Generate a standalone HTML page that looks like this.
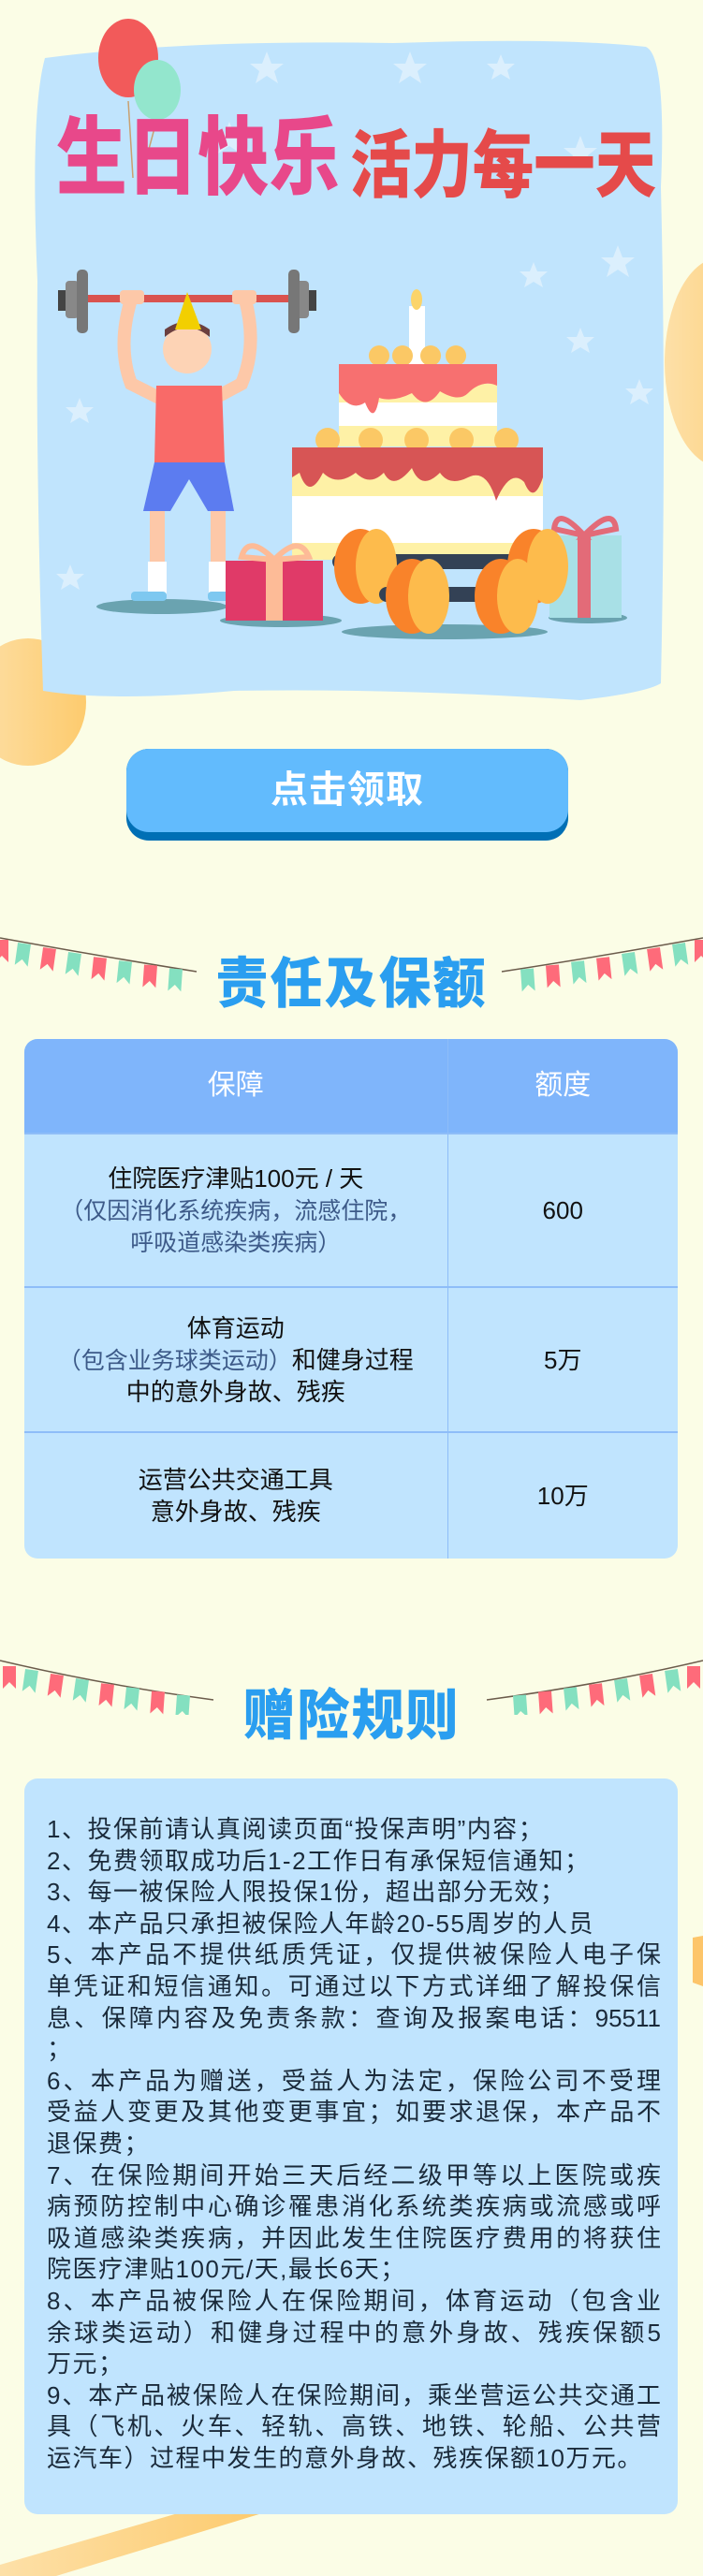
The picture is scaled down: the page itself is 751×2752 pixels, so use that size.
<!DOCTYPE html>
<html><head><meta charset="utf-8"><style>
*{margin:0;padding:0;box-sizing:border-box}
body{width:751px;height:2752px;background:#fbfde6;position:relative;overflow:hidden;font-family:"Liberation Sans","Noto Sans CJK SC",sans-serif}
.abs{position:absolute}
.btn{left:135px;top:800px;width:472px;height:98px;border-radius:24px;background:#006fb5}
.btn .face{position:absolute;left:0;top:0;width:472px;height:89px;border-radius:24px;background:#62bbfd;color:#fff;font-weight:bold;font-size:40px;text-align:center;line-height:89px;letter-spacing:1px}
.h2{color:#2a9ef0;font-weight:900;font-size:56px;text-align:center;width:751px;left:0;letter-spacing:2px;transform:scaleY(1.05)}
table{position:absolute;left:26px;top:1110px;width:698px;border-collapse:collapse;border-radius:14px;overflow:hidden;background:#c0e4fe}
td,th{text-align:center;color:#111;font-size:26px;line-height:34px;font-weight:normal}
th{background:#7fb5fb;color:#fff;font-size:30px;height:101px}
td{border-top:2px solid #8ebdf8}
td+td,th+th{border-left:1px solid #8ebdf8}
.sub{color:#3d5a88;font-size:25px;line-height:32px}
.rules{left:26px;top:1900px;width:698px;height:786px;background:#c0e4fe;border-radius:14px;padding:38px 18px 0 24px;font-size:26px;line-height:33.6px;color:#1a2a3a}
.rules div{white-space:nowrap;height:33.6px;letter-spacing:1.5px}
.rules .j{text-align:justify;text-align-last:justify;letter-spacing:0}
</style></head><body>
<svg class="abs" style="left:0;top:0" width="751" height="2752">
<defs><linearGradient id="yg" x1="0" x2="1"><stop offset="0" stop-color="#fde0a8"/><stop offset="1" stop-color="#fdcb6e"/></linearGradient></defs>
<ellipse cx="770" cy="387" rx="60" ry="112" fill="url(#yg)"/>
<ellipse cx="30" cy="750" rx="62" ry="68" fill="url(#yg)"/>
<polygon points="740,2070 751,2068 751,2122 740,2118" fill="#fdc56a"/>
<polygon points="0,2752 0,2740 190,2685 280,2685 60,2752" fill="url(#yg)"/>
</svg>
<svg class="abs" style="left:0;top:0" width="751" height="760">
<path d="M48,62 Q200,42 420,46 Q600,40 690,50 Q712,60 706,200 Q712,450 706,730 Q690,740 620,748 Q420,735 250,738 Q120,750 46,738 Q38,500 40,300 Q32,120 48,62Z" fill="#c0e4fd"/>
<g fill="#dbeffd">
<polygon points="285,55 290,68 303,68 293,76 297,89 285,81 273,89 277,76 267,68 280,68"/>
<polygon points="438,55 443,68 456,68 446,76 450,89 438,81 426,89 430,76 420,68 433,68"/>
<polygon points="535,58 539,68 550,68 542,75 545,85 535,79 525,85 528,75 520,68 531,68"/>
<polygon points="620,145 625,158 638,158 628,166 632,179 620,171 608,179 612,166 602,158 615,158"/>
<polygon points="660,262 665,275 678,275 668,283 672,296 660,288 648,296 652,283 642,275 655,275"/>
<polygon points="570,280 574,290 585,290 577,297 580,307 570,301 560,307 563,297 555,290 566,290"/>
<polygon points="620,350 624,360 635,360 627,367 630,377 620,371 610,377 613,367 605,360 616,360"/>
<polygon points="683,405 687,415 698,415 690,422 693,432 683,426 673,432 676,422 668,415 679,415"/>
<polygon points="85,425 89,435 100,435 92,442 95,452 85,446 75,452 78,442 70,435 81,435"/>
<polygon points="75,603 79,613 90,613 82,620 85,630 75,624 65,630 68,620 60,613 71,613"/>
<polygon points="245,130 250,143 263,143 253,151 257,164 245,156 233,164 237,151 227,143 240,143"/>
</g>
<path d="M137,108 L142,190 M168,126 L148,200" stroke="#c9a070" stroke-width="1.5" fill="none"/>
<ellipse cx="137" cy="62" rx="32" ry="42" fill="#f25a5a"/>
<ellipse cx="168" cy="96" rx="25" ry="32" fill="#93e6cd"/>
<g font-family="Liberation Sans,Noto Sans CJK SC,sans-serif" font-weight="900">
<text x="60" y="200" font-size="76" fill="#e8488a" textLength="303" lengthAdjust="spacingAndGlyphs" transform="translate(0,-40) scale(1,1.2)">生日快乐</text>
<text x="374" y="204" font-size="66" fill="#e54a4a" textLength="327" lengthAdjust="spacingAndGlyphs" transform="translate(0,-39) scale(1,1.19)">活力每一天</text>
</g>
<rect x="62" y="315" width="276" height="8" rx="3" fill="#d9534f"/>
<rect x="62" y="310" width="10" height="22" fill="#444"/><rect x="70" y="300" width="14" height="40" rx="4" fill="#888"/><rect x="82" y="288" width="12" height="68" rx="5" fill="#777"/>
<rect x="328" y="310" width="10" height="22" fill="#444"/><rect x="316" y="300" width="14" height="40" rx="4" fill="#888"/><rect x="308" y="288" width="12" height="68" rx="5" fill="#777"/>
<ellipse cx="173" cy="648" rx="70" ry="8" fill="#6aa3b0"/>
<path d="M140,320 Q125,370 140,410 L170,425" stroke="#fdc8a8" stroke-width="14" fill="none" stroke-linecap="round"/>
<path d="M262,320 Q275,370 258,410 L230,425" stroke="#fdc8a8" stroke-width="14" fill="none" stroke-linecap="round"/>
<rect x="128" y="310" width="26" height="15" rx="4" fill="#fdc8a8"/><rect x="248" y="310" width="26" height="15" rx="4" fill="#fdc8a8"/>
<rect x="160" y="540" width="16" height="95" fill="#fdc8a8"/><rect x="225" y="540" width="16" height="95" fill="#fdc8a8"/>
<rect x="158" y="600" width="20" height="35" fill="#fff"/><rect x="223" y="600" width="20" height="35" fill="#fff"/>
<rect x="140" y="632" width="38" height="10" rx="4" fill="#7ec8f0"/><rect x="222" y="632" width="30" height="10" rx="4" fill="#7ec8f0"/>
<circle cx="200" cy="373" r="26" fill="#fdd3b5"/>
<path d="M176,360 Q200,340 224,360 L224,352 Q200,335 176,352Z" fill="#6b3f3f"/>
<polygon points="200,312 187,352 215,352" fill="#f2cf00"/>
<path d="M167,412 L237,412 L240,494 L165,494Z" fill="#f96a68"/>
<path d="M165,494 L240,494 L250,546 L222,546 L202,512 L182,546 L153,546Z" fill="#5c7cf0"/>
<rect x="437" y="327" width="17" height="62" fill="#fff"/>
<ellipse cx="445" cy="320" rx="6" ry="11" fill="#fbd46a"/>
<g fill="#fbc865"><circle cx="405" cy="380" r="11"/><circle cx="430" cy="380" r="11"/><circle cx="460" cy="380" r="11"/><circle cx="487" cy="380" r="11"/></g>
<rect x="362" y="389" width="169" height="88" rx="4" fill="#fff"/>
<rect x="362" y="410" width="169" height="20" fill="#fef1a6"/><rect x="362" y="455" width="169" height="22" fill="#fef1a6"/>
<path d="M362,389 L531,389 L531,412 Q515,405 500,420 Q490,430 470,418 Q455,440 440,420 Q420,430 405,425 Q400,455 390,430 Q375,440 362,420Z" fill="#f77070"/>
<g fill="#fbc865"><circle cx="350" cy="470" r="13"/><circle cx="396" cy="470" r="13"/><circle cx="445" cy="470" r="13"/><circle cx="493" cy="470" r="13"/><circle cx="541" cy="470" r="13"/></g>
<rect x="312" y="478" width="268" height="120" rx="6" fill="#fff"/>
<rect x="312" y="500" width="268" height="30" fill="#fef1a6"/><rect x="312" y="580" width="268" height="18" fill="#fef1a6"/>
<path d="M312,478 L580,478 L580,510 Q570,540 560,515 Q545,500 530,535 Q520,500 500,510 Q480,520 470,505 Q450,525 440,500 Q420,525 410,505 Q395,520 380,505 Q360,520 345,505 Q330,535 320,505 L312,510Z" fill="#d75555"/>
<ellipse cx="300" cy="663" rx="65" ry="7" fill="#6aa3b0"/>
<rect x="241" y="599" width="104" height="64" fill="#e03a68"/><rect x="284" y="599" width="18" height="64" fill="#fdbb97"/>
<path d="M293,598 Q265,570 258,595 Z M293,598 Q320,570 330,595Z" fill="none" stroke="#fdbb97" stroke-width="6"/>
<ellipse cx="628" cy="660" rx="42" ry="6" fill="#6aa3b0"/>
<rect x="587" y="572" width="77" height="88" fill="#a8e0e6"/><rect x="617" y="572" width="14" height="88" fill="#e36b78"/>
<path d="M624,572 Q595,540 592,565Z M624,572 Q655,540 658,565Z" fill="none" stroke="#e36b78" stroke-width="6"/>
<ellipse cx="475" cy="675" rx="110" ry="8" fill="#6aa3b0"/>
<rect x="355" y="592" width="250" height="16" rx="8" fill="#334155"/>
<ellipse cx="385" cy="605" rx="28" ry="40" fill="#f9832a"/><ellipse cx="402" cy="605" rx="22" ry="40" fill="#fdbb4c"/>
<ellipse cx="570" cy="605" rx="28" ry="40" fill="#f9832a"/><ellipse cx="585" cy="605" rx="22" ry="40" fill="#fdbb4c"/>
<rect x="405" y="627" width="165" height="16" rx="8" fill="#334155"/>
<ellipse cx="440" cy="637" rx="28" ry="40" fill="#f9832a"/><ellipse cx="458" cy="637" rx="22" ry="40" fill="#fdbb4c"/>
<ellipse cx="535" cy="637" rx="28" ry="40" fill="#f9832a"/><ellipse cx="553" cy="637" rx="22" ry="40" fill="#fdbb4c"/>
</svg>
<div class="abs btn"><div class="face">点击领取</div></div>

<svg class="abs" style="left:0;top:990px" width="751" height="70">
<path d="M0,12 Q110,32 210,48" stroke="#6b5b4b" stroke-width="1.5" fill="none"/>
<path d="M536,48 Q640,32 751,12" stroke="#6b5b4b" stroke-width="1.5" fill="none"/>
<g id="fl">
<path d="M-5,14 h14 v24 l-7,-7 l-7,7z" fill="#fe6b7a"/>
<path d="M19,18 h14 v24 l-7,-7 l-7,7z" fill="#84e0c0" transform="rotate(8 26 18)"/>
<path d="M46,23 h14 v24 l-7,-7 l-7,7z" fill="#fe6b7a" transform="rotate(8 53 23)"/>
<path d="M73,28 h14 v24 l-7,-7 l-7,7z" fill="#84e0c0" transform="rotate(8 80 28)"/>
<path d="M100,33 h14 v24 l-7,-7 l-7,7z" fill="#fe6b7a" transform="rotate(6 107 33)"/>
<path d="M127,37 h14 v24 l-7,-7 l-7,7z" fill="#84e0c0" transform="rotate(6 134 37)"/>
<path d="M154,41 h14 v24 l-7,-7 l-7,7z" fill="#fe6b7a" transform="rotate(4 161 41)"/>
<path d="M181,45 h14 v24 l-7,-7 l-7,7z" fill="#84e0c0" transform="rotate(4 188 45)"/>
</g>
<use href="#fl" transform="translate(751,0) scale(-1,1)"/>
</svg>
<div class="abs h2" style="top:1006px">责任及保额</div>

<table>
<tr><th style="width:452px">保障</th><th>额度</th></tr>
<tr style="height:164px"><td>住院医疗津贴100元 / 天<br><span class="sub">（仅因消化系统疾病，流感住院，<br>呼吸道感染类疾病）</span></td><td>600</td></tr>
<tr style="height:155px"><td>体育运动<br><span class="sub">（包含业务球类运动）</span>和健身过程<br>中的意外身故、残疾</td><td>5万</td></tr>
<tr style="height:135px"><td>运营公共交通工具<br>意外身故、残疾</td><td>10万</td></tr>
</table>

<svg class="abs" style="left:0;top:1762px" width="751" height="70">
<path d="M0,12 Q110,38 228,54" stroke="#6b5b4b" stroke-width="1.5" fill="none"/>
<path d="M520,54 Q640,38 751,12" stroke="#6b5b4b" stroke-width="1.5" fill="none"/>
<use href="#fl" transform="translate(8,4)"/>
<use href="#fl" transform="translate(743,4) scale(-1,1)"/>
</svg>
<div class="abs h2" style="top:1788px">赠险规则</div>

<div class="abs rules">
<div>1、投保前请认真阅读页面“投保声明”内容；</div>
<div>2、免费领取成功后1-2工作日有承保短信通知；</div>
<div>3、每一被保险人限投保1份，超出部分无效；</div>
<div>4、本产品只承担被保险人年龄20-55周岁的人员</div>
<div class="j">5、本产品不提供纸质凭证，仅提供被保险人电子保</div>
<div class="j">单凭证和短信通知。可通过以下方式详细了解投保信</div>
<div class="j">息、保障内容及免责条款：查询及报案电话：95511</div>
<div>；</div>
<div class="j">6、本产品为赠送，受益人为法定，保险公司不受理</div>
<div class="j">受益人变更及其他变更事宜；如要求退保，本产品不</div>
<div>退保费；</div>
<div class="j">7、在保险期间开始三天后经二级甲等以上医院或疾</div>
<div class="j">病预防控制中心确诊罹患消化系统类疾病或流感或呼</div>
<div class="j">吸道感染类疾病，并因此发生住院医疗费用的将获住</div>
<div>院医疗津贴100元/天,最长6天；</div>
<div class="j">8、本产品被保险人在保险期间，体育运动（包含业</div>
<div class="j">余球类运动）和健身过程中的意外身故、残疾保额5</div>
<div>万元；</div>
<div class="j">9、本产品被保险人在保险期间，乘坐营运公共交通工</div>
<div class="j">具（飞机、火车、轻轨、高铁、地铁、轮船、公共营</div>
<div>运汽车）过程中发生的意外身故、残疾保额10万元。</div>
</div>
</body></html>
